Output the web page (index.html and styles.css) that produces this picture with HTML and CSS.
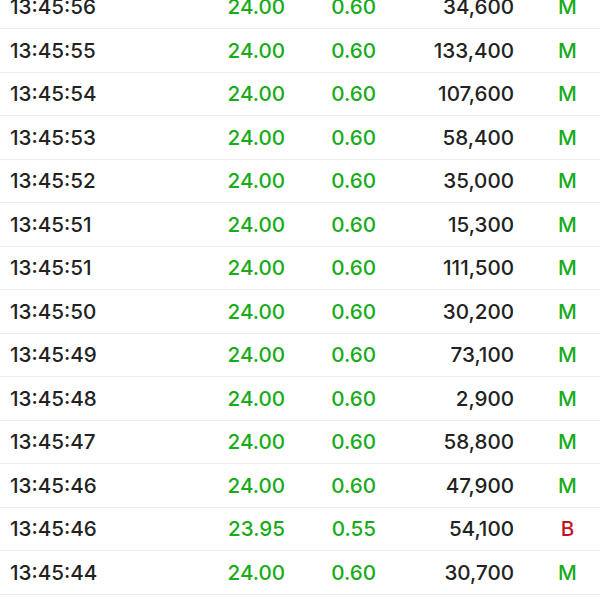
FILE: index.html
```html
<!DOCTYPE html>
<html>
<head>
<meta charset="utf-8">
<link rel="stylesheet" href="styles.css">
</head>
<body>
<div class="list">
  <div class="row"><span class="time">13:45:56</span><span class="num up">24.00</span><span class="num up">0.60</span><span class="num vol">34,600</span><span class="flag up">M</span></div>
  <div class="row"><span class="time">13:45:55</span><span class="num up">24.00</span><span class="num up">0.60</span><span class="num vol">133,400</span><span class="flag up">M</span></div>
  <div class="row"><span class="time">13:45:54</span><span class="num up">24.00</span><span class="num up">0.60</span><span class="num vol">107,600</span><span class="flag up">M</span></div>
  <div class="row"><span class="time">13:45:53</span><span class="num up">24.00</span><span class="num up">0.60</span><span class="num vol">58,400</span><span class="flag up">M</span></div>
  <div class="row"><span class="time">13:45:52</span><span class="num up">24.00</span><span class="num up">0.60</span><span class="num vol">35,000</span><span class="flag up">M</span></div>
  <div class="row"><span class="time">13:45:51</span><span class="num up">24.00</span><span class="num up">0.60</span><span class="num vol">15,300</span><span class="flag up">M</span></div>
  <div class="row"><span class="time">13:45:51</span><span class="num up">24.00</span><span class="num up">0.60</span><span class="num vol">111,500</span><span class="flag up">M</span></div>
  <div class="row"><span class="time">13:45:50</span><span class="num up">24.00</span><span class="num up">0.60</span><span class="num vol">30,200</span><span class="flag up">M</span></div>
  <div class="row"><span class="time">13:45:49</span><span class="num up">24.00</span><span class="num up">0.60</span><span class="num vol">73,100</span><span class="flag up">M</span></div>
  <div class="row"><span class="time">13:45:48</span><span class="num up">24.00</span><span class="num up">0.60</span><span class="num vol">2,900</span><span class="flag up">M</span></div>
  <div class="row"><span class="time">13:45:47</span><span class="num up">24.00</span><span class="num up">0.60</span><span class="num vol">58,800</span><span class="flag up">M</span></div>
  <div class="row"><span class="time">13:45:46</span><span class="num up">24.00</span><span class="num up">0.60</span><span class="num vol">47,900</span><span class="flag up">M</span></div>
  <div class="row"><span class="time">13:45:46</span><span class="num up">23.95</span><span class="num up">0.55</span><span class="num vol">54,100</span><span class="flag down">B</span></div>
  <div class="row"><span class="time">13:45:44</span><span class="num up">24.00</span><span class="num up">0.60</span><span class="num vol">30,700</span><span class="flag up">M</span></div>
</div>
</body>
</html>
```
FILE: styles.css
```css
html, body {
  margin: 0;
  padding: 0;
  background: #ffffff;
  overflow: hidden;
}
body {
  font-family: Inter, "Liberation Sans", sans-serif;
  font-weight: 500;
  font-size: 20.6px;
  color: #222222;
}
.list {
  margin-top: -14.5px;
}
.row {
  display: grid;
  grid-template-columns: 180px 95px 91px 138px 1fr;
  align-items: center;
  height: 42.5px;
  padding-left: 10px;
  border-bottom: 1px solid #efefef;
}
.num {
  text-align: right;
}
.time {
  color: #222222;
}
.vol {
  color: #222222;
}
.up {
  color: #1aab1a;
}
.down {
  color: #c4111e;
}
.flag {
  text-align: center;
  padding-left: 21px;
}
```
